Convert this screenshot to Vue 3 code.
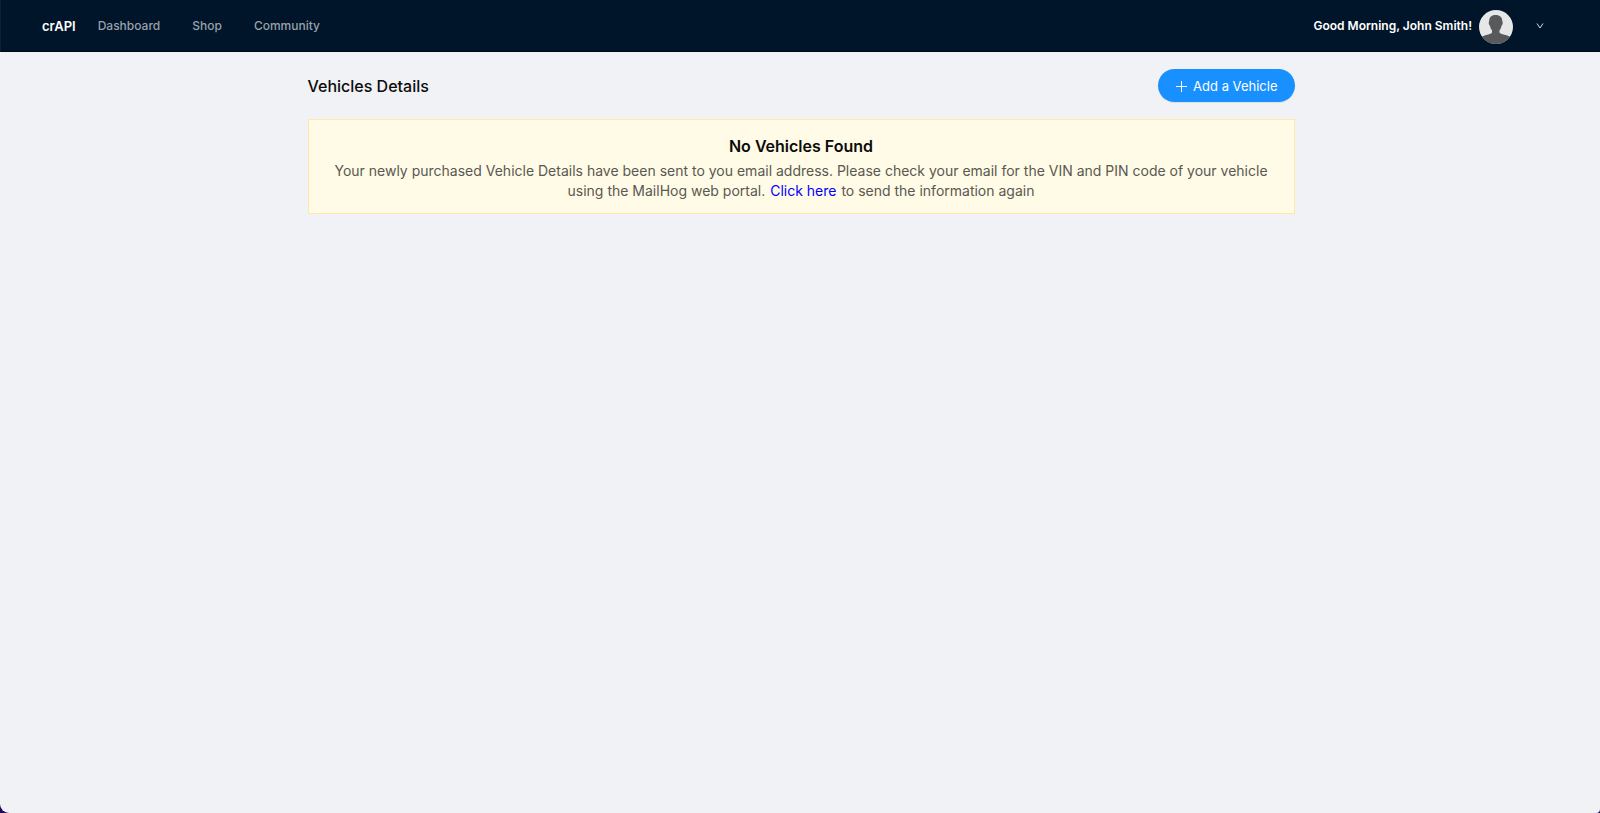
<script setup>
const links = ['Dashboard', 'Shop', 'Community']
const userName = 'John Smith'
</script>

<template>
  <div class="page">
    <header class="topbar">
      <a class="brand" href="#">crAPI</a>
      <nav class="menu">
        <a v-for="link in links" :key="link" href="#">{{ link }}</a>
      </nav>
      <span class="greeting">Good Morning, {{ userName }}!</span>
      <svg class="avatar" viewBox="0 0 34 34" aria-hidden="true">
        <defs>
          <clipPath id="avatar-circle"><circle cx="17" cy="17" r="17" /></clipPath>
        </defs>
        <g clip-path="url(#avatar-circle)">
          <rect width="34" height="34" fill="#e6e7e8" />
          <path
            fill="#58595b"
            d="M16.500 5C12.300 5 10 7.600 10.200 11.500C9.400 11.500 9.700 15 10.900 15.500C11.300 17.800 12 19.200 13 20.300V22.600C12 24.600 5.500 24.800 2.500 27.200V34H31.500V27.200C28.500 24.800 21.500 24.600 20.500 22.600V20.300C21.500 19.200 22.200 17.800 22.600 15.500C23.800 15 24.100 11.500 23.300 11.500C23.500 7.600 21 5 16.500 5Z"
          />
        </g>
      </svg>
      <button class="toggle" type="button" aria-label="Account menu">
        <svg viewBox="0 0 8 8" aria-hidden="true">
          <path d="M1 1.500L4 6L7 1.500" fill="none" stroke="currentColor" />
        </svg>
      </button>
    </header>

    <main class="content">
      <div class="heading">
        <h1>Vehicles Details</h1>
        <button class="add" type="button">
          <svg viewBox="0 0 12 12" aria-hidden="true">
            <path d="M6.500 1V12M1 6.500H12" fill="none" stroke="currentColor" />
          </svg>
          <span>Add a Vehicle</span>
        </button>
      </div>
      <section class="alert">
        <h2>No Vehicles Found</h2>
        <p>
          Your newly purchased Vehicle Details have been sent to you email address. Please check
          your email for the VIN and PIN code of your vehicle using the MailHog web portal.
          <a href="#">Click here</a> to send the information again
        </p>
      </section>
    </main>
  </div>
</template>

<style>
body {
  background: #1d0a5b;
}
</style>

<style scoped>
.page {
  min-height: 100vh;
  background: #f0f2f5;
  border-radius: 0 0 4px 9px;
  font-family: Inter, "Liberation Sans", sans-serif;
  color: #0b0b0c;
}
.topbar {
  display: flex;
  align-items: center;
  height: 52px;
  padding: 0 56px 0 41px;
  box-sizing: border-box;
  background: #001529;
  border-left: 1px solid #0d2133;
  border-bottom: 1px solid #000a14;
  font-size: 12px;
  font-weight: 600;
}
.topbar a {
  text-decoration: none;
}
.brand {
  color: #fff;
  font-size: 13px;
}
.menu {
  display: flex;
  gap: 32px;
  margin-left: 22px;
}
.menu a {
  color: #99a1a9;
  font-weight: 500;
}
.greeting {
  margin-left: auto;
  color: #fff;
}
.avatar {
  width: 34px;
  height: 34px;
  margin: 2px 23px 0 7px;
}
.toggle {
  display: flex;
  padding: 0;
  border: 0;
  background: none;
  color: #d5d9dd;
}
.toggle svg {
  width: 8px;
  height: 8px;
}
.content {
  max-width: 987px;
  margin: 0 auto;
  padding: 17px 0 0 2px;
}
.heading {
  display: flex;
  align-items: center;
  justify-content: space-between;
  margin-bottom: 17px;
}
h1,
h2,
p {
  margin: 0;
}
h1 {
  font-size: 16px;
  font-weight: 500;
}
.add {
  display: flex;
  align-items: center;
  gap: 6px;
  height: 33px;
  padding: 0 17px;
  border: 0;
  border-radius: 17px;
  background: #1890ff;
  box-shadow: 0 1px 1px rgba(0, 0, 0, 0.08);
  color: #fff;
  font-family: inherit;
  font-size: 13px;
}
.add svg {
  width: 12px;
  height: 12px;
}
.alert {
  padding: 15px 23px 12px;
  border: 1px solid #ffe9a8;
  background: #fffbe6;
  text-align: center;
}
h2 {
  font-size: 16px;
  font-weight: 600;
  line-height: 22px;
}
.alert p {
  margin-top: 4px;
  color: #595852;
  font-size: 14px;
  line-height: 20px;
}
.alert a {
  margin: 0 1px;
  color: #00f;
  text-decoration: none;
}
</style>
